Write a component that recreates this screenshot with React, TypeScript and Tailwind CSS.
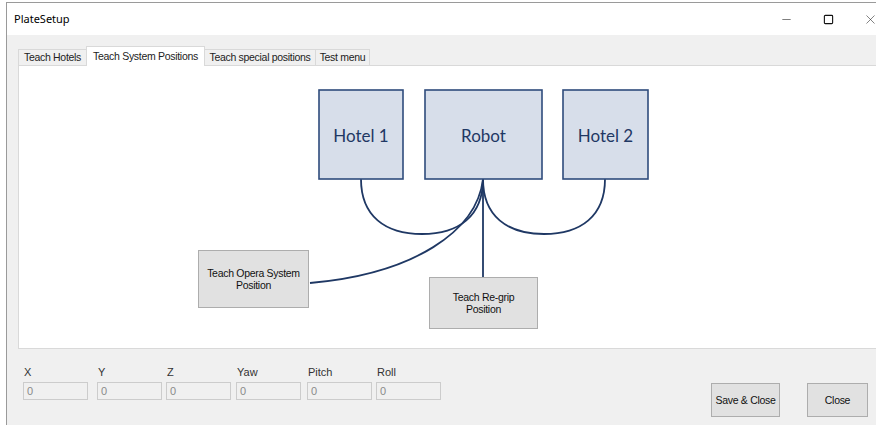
import { Minus, Square, X } from "lucide-react";

const tabs = [
  { label: "Teach Hotels", width: 69 },
  { label: "Teach System Positions", width: 117, active: true },
  { label: "Teach special positions", width: 112 },
  { label: "Test menu", width: 55 },
];

const fields = [
  { label: "X", width: 74 },
  { label: "Y", width: 69 },
  { label: "Z", width: 70 },
  { label: "Yaw", width: 71 },
  { label: "Pitch", width: 69 },
  { label: "Roll", width: 65 },
];

const winFont = { fontFamily: '"Liberation Sans", Arial, sans-serif' };

const Diagram = () => (
  <svg
    className="absolute left-0 top-0"
    width="857"
    height="282"
    viewBox="0 0 857 282"
    fill="none"
  >
    <g stroke="#1f3864" strokeWidth="1.8" fill="none">
      <path d="M342 113 C342 150 366 168 403 168 C440 168 464 150 464 113" />
      <path d="M464 113 C464 150 488 168 525 168 C562 168 586 150 586 113" />
      <path d="M464 113 C458 165 395 208 291 217" />
      <path d="M464 113 L464 211" />
    </g>
    <g fill="#d7deea" stroke="#2f4b7c" strokeWidth="1.6">
      <rect x="300" y="24" width="84" height="89" />
      <rect x="406" y="24" width="117" height="89" />
      <rect x="544" y="24" width="85" height="89" />
    </g>
    <g
      fill="#1f3864"
      fontSize="17"
      textAnchor="middle"
      dominantBaseline="central"
      style={{ fontFamily: "Lato, 'Open Sans', sans-serif" }}
    >
      <text x="342" y="69">Hotel 1</text>
      <text x="464.5" y="69">Robot</text>
      <text x="586.5" y="69">Hotel 2</text>
    </g>
  </svg>
);

const FormButton = ({
  children,
  className,
}: {
  children: React.ReactNode;
  className: string;
}) => (
  <button
    type="button"
    className={`bg-[#e1e1e1] border border-[#adadad] text-[10.5px] tracking-[-0.3px] leading-[12px] text-[#111] flex items-center justify-center text-center whitespace-nowrap ${className}`}
    style={winFont}
  >
    {children}
  </button>
);

const App = () => {
  return (
    <div className="w-[876px] h-[425px] bg-white overflow-hidden">
      <div className="ml-[6px] mt-[2px] w-[885px] h-[423px] border-l border-t border-[#9a9a9a] flex flex-col">
        {/* title bar */}
        <div className="h-[32px] bg-white flex items-center">
          <span
            className="pl-[7px] text-[11px] text-black flex-1"
            style={{ fontFamily: '"Noto Sans", "Open Sans", sans-serif' }}
          >
            PlateSetup
          </span>
          <div className="w-[42px] h-full flex items-center justify-center">
            <Minus size={13} strokeWidth={1} color="#111" />
          </div>
          <div className="w-[42px] h-full flex items-center justify-center">
            <Square size={11} strokeWidth={1.1} color="#111" absoluteStrokeWidth />
          </div>
          <div className="w-[42px] h-full flex items-center justify-center">
            <X size={15} strokeWidth={0.9} color="#222" />
          </div>
        </div>

        {/* client area */}
        <div className="flex-1 bg-[#f0f0f0] pl-[11px] pt-[11px]" style={winFont}>
          <div className="flex items-end h-[19px] pl-[1px]">
            {tabs.map((t) =>
              t.active ? (
                <div
                  key={t.label}
                  className="relative z-10 -ml-[1px] h-[20px] -mb-px bg-white border border-b-0 border-[#d9d9d9] flex items-start justify-center pt-[2px] text-[10.5px] tracking-[-0.3px] text-[#222] whitespace-nowrap"
                  style={{ width: t.width + 2 }}
                >
                  {t.label}
                </div>
              ) : (
                <div
                  key={t.label}
                  className="h-[16px] -ml-[1px] bg-[#f0f0f0] border border-b-0 border-[#d9d9d9] flex items-center justify-center text-[10.5px] tracking-[-0.3px] text-[#222] whitespace-nowrap"
                  style={{ width: t.width }}
                >
                  {t.label}
                </div>
              )
            )}
          </div>

          {/* tab page */}
          <div className="relative h-[284px] bg-white border border-[#d9d9d9]">
            <Diagram />
            <FormButton className="absolute left-[179px] top-[184px] w-[111px] h-[58px]">
              Teach Opera System
              <br />
              Position
            </FormButton>
            <FormButton className="absolute left-[410px] top-[211px] w-[109px] h-[52px]">
              Teach Re-grip
              <br />
              Position
            </FormButton>
          </div>

          {/* coordinates and actions */}
          <div className="flex items-start pt-[17px] pl-[5px]">
            <div className="flex">
              {fields.map((f) => (
                <div key={f.label} className="flex flex-col" style={{ width: f.width }}>
                  <span className="text-[11px] leading-[13px] text-[#333] pl-[1px] h-[16px]">
                    {f.label}
                  </span>
                  <div className="w-[65px] h-[18px] border border-[#cccccc] bg-[#f0f0f0] text-[11px] text-[#8a8a8a] pl-[3px] leading-[16px]">
                    0
                  </div>
                </div>
              ))}
            </div>
            <div className="flex gap-[27px] ml-[270px] mt-[17px]">
              <FormButton className="w-[69px] h-[34px]">Save &amp; Close</FormButton>
              <FormButton className="w-[61px] h-[34px]">Close</FormButton>
            </div>
          </div>
        </div>
      </div>
    </div>
  );
};

export default App;
